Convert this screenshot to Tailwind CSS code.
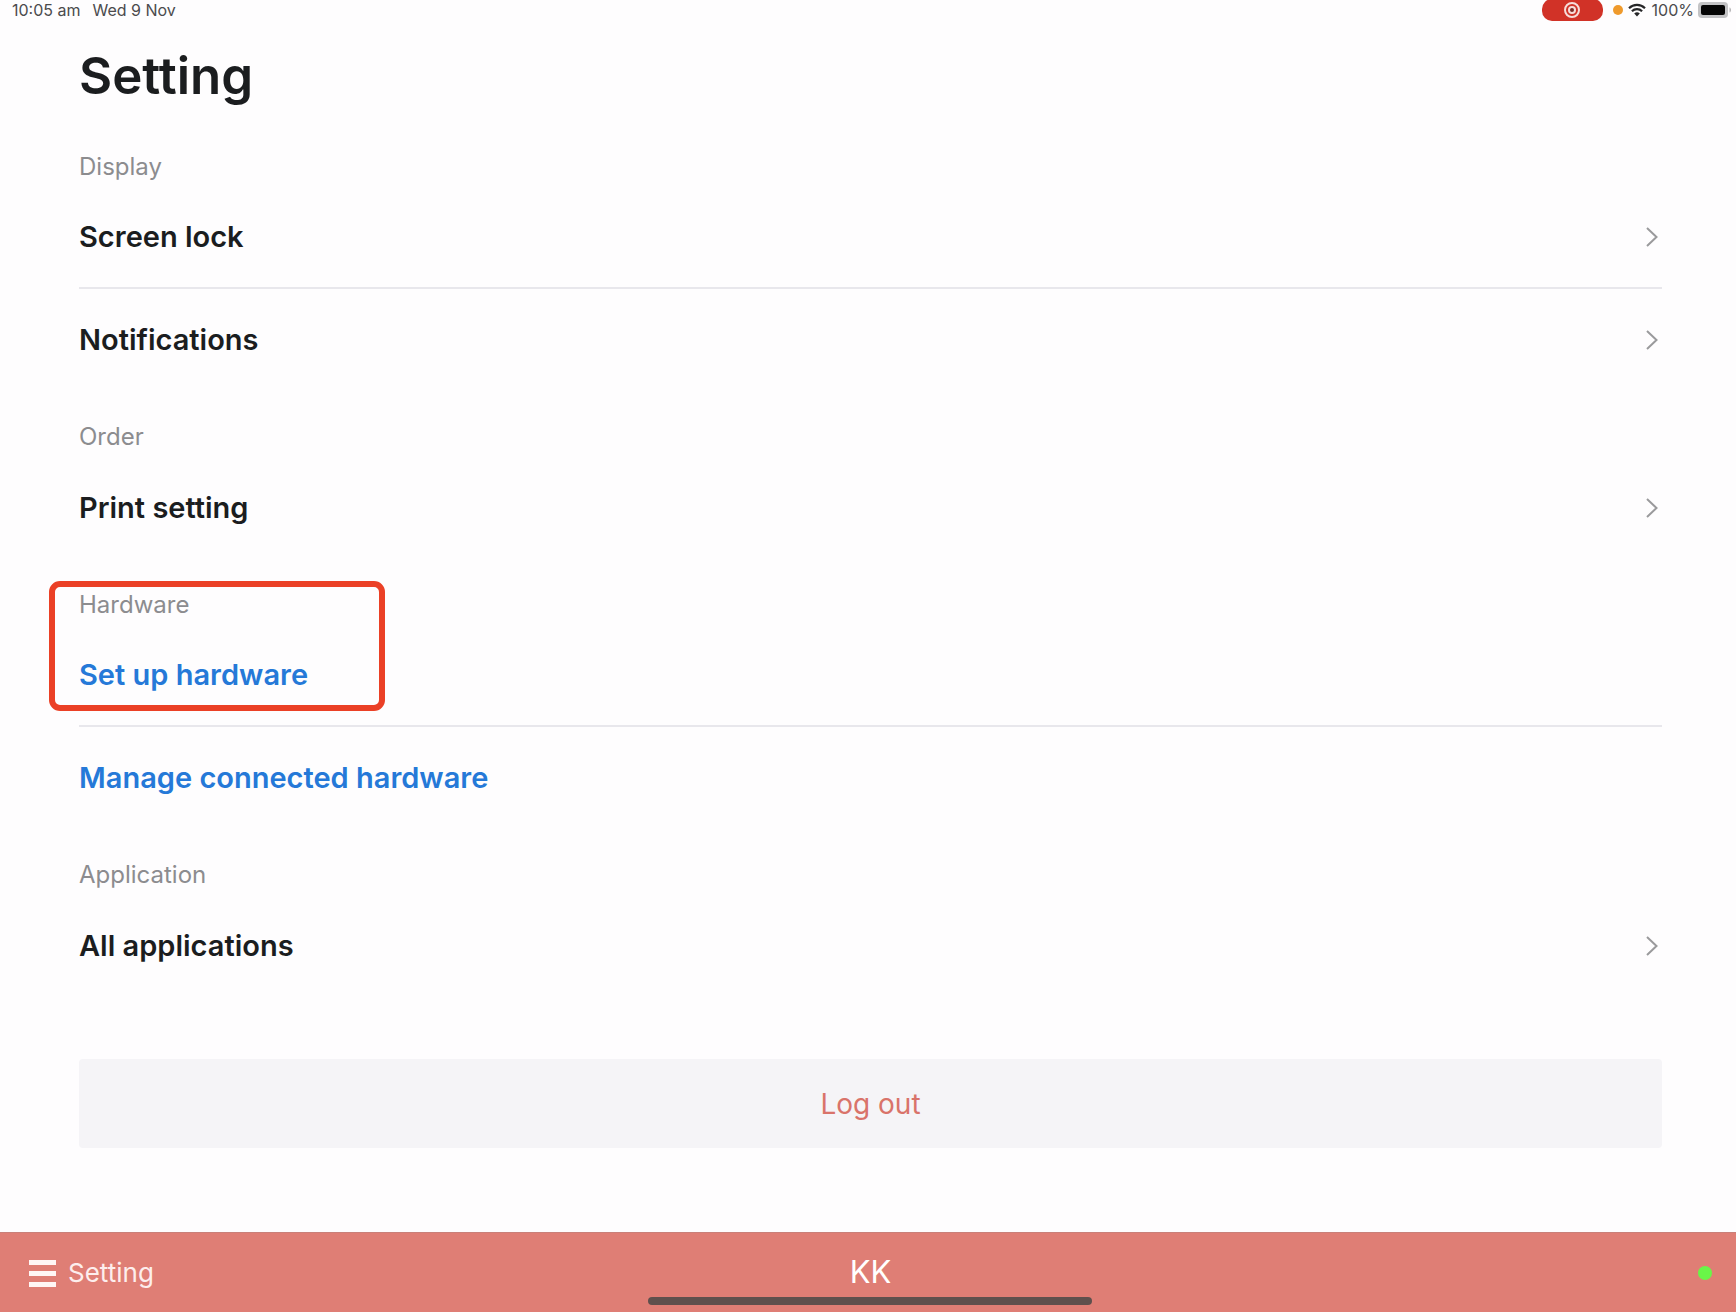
<!DOCTYPE html>
<html lang="en">
<head>
<meta charset="utf-8">
<meta name="viewport" content="width=device-width, initial-scale=1">
<title>Setting</title>
<script src="https://cdn.jsdelivr.net/npm/@tailwindcss/browser@4"></script>
</head>
<body class="flex min-h-screen flex-col bg-[#fefdfe] font-[Inter,Roboto,sans-serif] text-[#1b1d1f]">

<!-- Status bar -->
<header class="flex h-5 items-center justify-between pr-1 pl-3 text-[16px] leading-5 text-[#4b4b4d]">
  <div class="flex gap-3">
    <span>10:05 am</span>
    <span>Wed 9 Nov</span>
  </div>
  <div class="flex items-center">
    <span class="flex h-[22px] w-[61px] items-center justify-center rounded-[10px] bg-[#d13227]">
      <svg class="size-[18px]" viewBox="0 0 18 18" fill="none" aria-label="Recording">
        <circle cx="9" cy="9" r="7" stroke="#f6dcd9" stroke-width="2"/>
        <circle cx="9" cy="9" r="4" fill="#f6dcd9"/>
        <circle cx="9" cy="9" r="2" fill="#7c2b26"/>
      </svg>
    </span>
    <span class="ml-[10px] size-[10px] rounded-full bg-[#ef9a2c]"></span>
    <svg class="ml-[5px] h-[14px] w-[18px]" viewBox="0 0 18 14" aria-label="Wi-Fi">
      <path d="M1 5.2a11.5 11.5 0 0 1 16 0M3.9 8.2a7.3 7.3 0 0 1 10.2 0" fill="none" stroke="#262628" stroke-width="2.2"/>
      <path d="M9 13.4 6.2 10.6a4 4 0 0 1 5.6 0z" fill="#262628"/>
    </svg>
    <span class="ml-[6px]">100%</span>
    <svg class="ml-1 h-4 w-[34px]" viewBox="0 0 34 16" aria-label="Battery full">
      <rect x="0" y="0" width="30" height="16" rx="4" fill="#c3c3c5"/>
      <rect x="3" y="3" width="24" height="10" rx="2" fill="#050505"/>
      <path d="M31.500 5.500c2 .6 2 4.400 0 5z" fill="#b5b5b7"/>
    </svg>
  </div>
</header>

<main class="flex-1 pr-[74px] pl-[79px]">
  <h1 class="mt-6 mb-[39px] text-[51px] leading-16 font-semibold">Setting</h1>

  <section class="mb-[26px]">
    <h2 class="text-[24px] leading-10 text-[#8c8c8f]">Display</h2>
    <a href="#" class="flex h-[102px] items-center justify-between border-b-2 border-[#e8e7ec] text-[29px] font-semibold">
      Screen lock
      <svg class="mr-1 h-5 w-3" viewBox="0 0 12 20" fill="none" stroke="#9a9a9c" stroke-width="2" aria-hidden="true"><path d="m1 1 9.500 9L1 19"/></svg>
    </a>
    <a href="#" class="flex h-[102px] items-center justify-between text-[29px] font-semibold">
      Notifications
      <svg class="mr-1 h-5 w-3" viewBox="0 0 12 20" fill="none" stroke="#9a9a9c" stroke-width="2" aria-hidden="true"><path d="m1 1 9.500 9L1 19"/></svg>
    </a>
  </section>

  <section class="mb-[26px]">
    <h2 class="text-[24px] leading-10 text-[#8c8c8f]">Order</h2>
    <a href="#" class="flex h-[102px] items-center justify-between text-[29px] font-semibold">
      Print setting
      <svg class="mr-1 h-5 w-3" viewBox="0 0 12 20" fill="none" stroke="#9a9a9c" stroke-width="2" aria-hidden="true"><path d="m1 1 9.500 9L1 19"/></svg>
    </a>
  </section>

  <section class="relative mb-[26px]">
    <!-- Highlight around the hardware setup entry -->
    <div class="pointer-events-none absolute -top-1 -left-[30px] h-[130px] w-[336px] rounded-[11px] border-6 border-[#eb4026]"></div>
    <h2 class="text-[24px] leading-10 text-[#8c8c8f]">Hardware</h2>
    <a href="#" class="flex h-[102px] items-center border-b-2 border-[#e8e7ec] text-[29px] font-semibold text-[#2579d8]">Set up hardware</a>
    <a href="#" class="flex h-[102px] items-center text-[29px] font-semibold text-[#2579d8]">Manage connected hardware</a>
  </section>

  <section>
    <h2 class="text-[24px] leading-10 text-[#8c8c8f]">Application</h2>
    <a href="#" class="flex h-[102px] items-center justify-between text-[29px] font-semibold">
      All applications
      <svg class="mr-1 h-5 w-3" viewBox="0 0 12 20" fill="none" stroke="#9a9a9c" stroke-width="2" aria-hidden="true"><path d="m1 1 9.500 9L1 19"/></svg>
    </a>
  </section>

  <button type="button" class="mt-[62px] mb-12 h-[89px] w-full rounded-[4px] bg-[#f5f4f7] text-[28px] text-[#d9736a]">Log out</button>
</main>

<footer class="relative grid h-20 grid-cols-3 items-center border-t border-[#c98079] bg-[#df7e75] pr-6 pl-[29px] text-white">
  <button type="button" class="flex items-center gap-3 justify-self-start text-[26px] text-[#fdeeed]">
    <svg class="h-7 w-[27px]" viewBox="0 0 27 28" fill="#fff6f5" aria-hidden="true"><path d="M0 1h27v5H0zM0 12h27v5H0zM0 23h27v5H0z"/></svg>
    Setting
  </button>
  <span class="justify-self-center text-[31px]">KK</span>
  <span class="size-[14px] justify-self-end rounded-full bg-[#69f548]"></span>
  <!-- Home indicator -->
  <div class="absolute inset-x-0 bottom-[7px] flex justify-center pl-1">
    <div class="h-2 w-[444px] rounded-full bg-[#5f504d]"></div>
  </div>
</footer>
</body>
</html>
